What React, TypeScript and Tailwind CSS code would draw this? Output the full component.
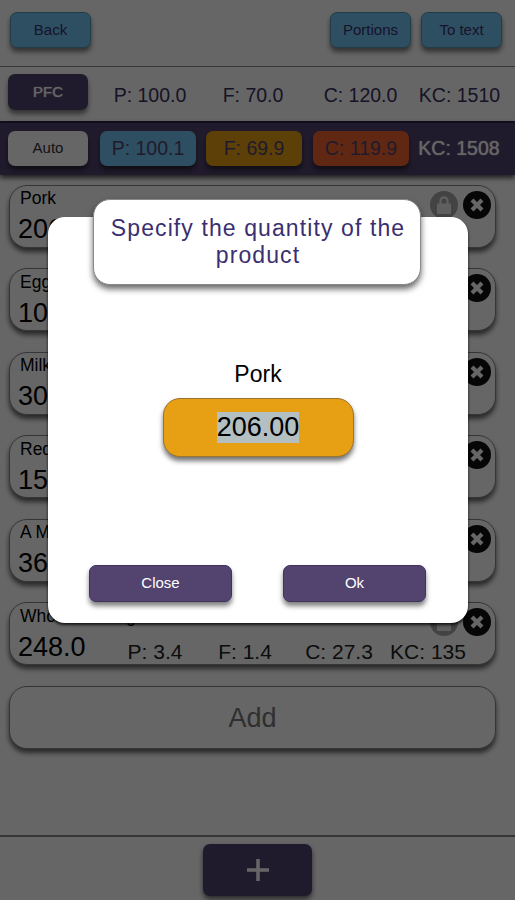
const products = [
  { name: 'Pork', weight: '206.0', p: '29.3', f: '33.4', c: '0.0', kc: '418' },
  { name: 'Egg', weight: '100.0', p: '12.7', f: '10.9', c: '0.7', kc: '157' },
  { name: 'Milk', weight: '300.0', p: '9.0', f: '9.6', c: '14.1', kc: '177' },
  { name: 'Red beans', weight: '150.0', p: '12.6', f: '0.8', c: '32.2', kc: '187' },
  { name: 'A Mango', weight: '360.0', p: '2.9', f: '1.4', c: '54.0', kc: '240' },
  { name: 'Whole wheat groats', weight: '248.0', p: '3.4', f: '1.4', c: '27.3', kc: '135' },
];

const buttonBase = 'flex items-center justify-center rounded-[7px] text-[15px] shadow-[0_4px_5px_rgba(0,0,0,0.5)]';
const blueButton = `${buttonBase} h-9 w-[81px] border border-[#5596b5] bg-[#74c6f2] text-[#3a2f70]`;
const cardBase = 'h-[63px] shrink-0 rounded-[18px] border border-[#888] shadow-[0_4px_5px_rgba(0,0,0,0.6)]';

function LockIcon() {
  return (
    <svg viewBox="0 0 28 28" className="size-7">
      <circle cx="14" cy="14" r="14" fill="#a8a8a8" />
      <rect x="7" y="12.5" width="14" height="10.5" rx="1" fill="#eee" />
      <path d="M10.5 13.5V9.8a3.5 3.5 0 0 1 7 0v3.7" fill="none" stroke="#eee" strokeWidth="2.2" />
    </svg>
  );
}

function RemoveIcon() {
  return (
    <svg viewBox="0 0 28 28" className="size-7">
      <circle cx="14" cy="14" r="14" fill="#111" />
      <path d="M9 9l10 10M19 9L9 19" stroke="#fff" strokeWidth="4.2" />
    </svg>
  );
}

function ProductCard({ product }: { product: (typeof products)[number] }) {
  return (
    <div className={`${cardBase} relative bg-white pl-[8px] text-black`}>
      <p className="pt-[2.5px] pl-[2px] text-[17.5px] leading-5">{product.name}</p>
      <div className="mt-[5px] flex items-center leading-[30px]">
        <span className="w-[92px] text-[27px] leading-[26px]">{product.weight}</span>
        <div className="flex pt-[10px] text-[21px] leading-[22px] text-[#222]">
          <span className="w-[90px] text-center">P: {product.p}</span>
          <span className="w-[90px] text-center">F: {product.f}</span>
          <span className="w-[98px] text-center">C: {product.c}</span>
          <span className="w-[80px] text-center whitespace-nowrap">KC: {product.kc}</span>
        </div>
      </div>
      <div className="absolute top-[5px] right-[4.5px] flex gap-[5px]">
        <LockIcon />
        <RemoveIcon />
      </div>
    </div>
  );
}

export default function App() {
  return (
    <div className="relative flex h-[900px] w-[515px] flex-col overflow-hidden bg-white font-['Liberation_Sans',Arial,sans-serif]">
      <header className="flex h-[67px] shrink-0 items-start border-b border-[#8b8b8b] pt-3 pr-[13px] pl-[10px]">
        <button className={blueButton}>Back</button>
        <div className="ml-auto flex gap-[10px]">
          <button className={blueButton}>Portions</button>
          <button className={blueButton}>To text</button>
        </div>
      </header>

      {/* Daily target */}
      <div className="flex h-[54px] shrink-0 pt-[7px] pl-2 text-[19.5px] leading-[42px] text-[#3a3060]">
        <button className={`${buttonBase} h-9 w-20 bg-[#52446f] text-white [text-shadow:0_0_1px_#fff]`}>PFC</button>
        <span className="ml-3 w-[100px] text-center">P: 100.0</span>
        <span className="ml-[3px] w-[100px] text-center">F: 70.0</span>
        <span className="ml-[7px] w-[101px] text-center">C: 120.0</span>
        <span className="w-[97px] text-center">KC: 1510</span>
      </div>

      {/* Current total */}
      <div className="z-10 flex h-[54px] shrink-0 border-t-2 border-[#2b2147] bg-[#52446f] pt-[8px] pl-2 text-[19.5px] text-[#52446f] shadow-[0_3px_5px_rgba(0,0,0,0.7)]">
        <button className={`${buttonBase} h-[35px] w-20 bg-white text-[#333]`}>Auto</button>
        <div className="ml-3 flex h-[35px] w-24 items-center justify-center rounded-[7px] bg-[#74c6f2] shadow-[0_4px_5px_rgba(0,0,0,0.5)]">P: 100.1</div>
        <div className="ml-[10px] flex h-[35px] w-24 items-center justify-center rounded-[7px] bg-[#e7a014] shadow-[0_4px_5px_rgba(0,0,0,0.5)]">F: 69.9</div>
        <div className="ml-[11px] flex h-[35px] w-24 items-center justify-center rounded-[7px] bg-[#f06530] shadow-[0_4px_5px_rgba(0,0,0,0.5)]">C: 119.9</div>
        <span className="w-[100px] text-center leading-[35px] text-white [text-shadow:0_0_1px_#fff]">KC: 1508</span>
      </div>

      <main className="flex flex-1 flex-col gap-[20.6px] pt-[9.5px] pr-[19px] pl-[9px]">
        {products.map((product) => (
          <ProductCard key={product.name} product={product} />
        ))}
        <button className={`${cardBase} bg-white pt-px text-[27px] text-[#777]`}>Add</button>
      </main>

      <footer className="flex h-[65px] shrink-0 justify-center border-t-2 border-[#888] pt-[7px]">
        <button className="flex h-[52px] w-[109px] items-center justify-center rounded-[7px] bg-[#52446f] shadow-[0_3px_5px_rgba(0,0,0,0.6)]">
          <svg viewBox="0 0 22 22" className="size-[22px]">
            <path d="M11 0v22M0 11h22" stroke="#fff" strokeWidth="3.5" />
          </svg>
        </button>
      </footer>

      {/* Quantity dialog */}
      <div className="absolute inset-0 z-20 bg-black/60 pt-[217px] pl-[48px]">
        <div className="relative flex h-[406px] w-[420px] flex-col items-center rounded-[17px] bg-white pt-[142px] shadow-[0_2px_3px_rgba(0,0,0,0.8)]">
          <h2 className="absolute top-[-18px] left-[45px] h-[86px] w-[328px] rounded-[17px] border border-[#888] bg-white pt-[15px] pl-[2px] text-center text-[23px] leading-[26.5px] tracking-[1.1px] text-[#3a2f70] shadow-[0_4px_6px_rgba(0,0,0,0.6)]">
            Specify the quantity of the product
          </h2>
          <p className="text-[23px] leading-[31px] text-black">Pork</p>
          <div className="mt-[8px] flex h-[59px] w-[191px] items-center justify-center rounded-[17px] border border-[#9a7430] bg-[#e7a014] text-[27px] leading-[31px] text-black shadow-[0_4px_5px_rgba(0,0,0,0.55)]">
            <span className="bg-[#b3bfc0]">206.00</span>
          </div>
          <div className="mt-[108px] flex gap-[51px] pr-px text-white [text-shadow:0_0_1px_#fff]">
            <button className={`${buttonBase} h-[37px] w-[143px] border border-[#40345e] bg-[#52446f]`}>Close</button>
            <button className={`${buttonBase} h-[37px] w-[143px] border border-[#40345e] bg-[#52446f]`}>Ok</button>
          </div>
        </div>
      </div>
    </div>
  );
}
